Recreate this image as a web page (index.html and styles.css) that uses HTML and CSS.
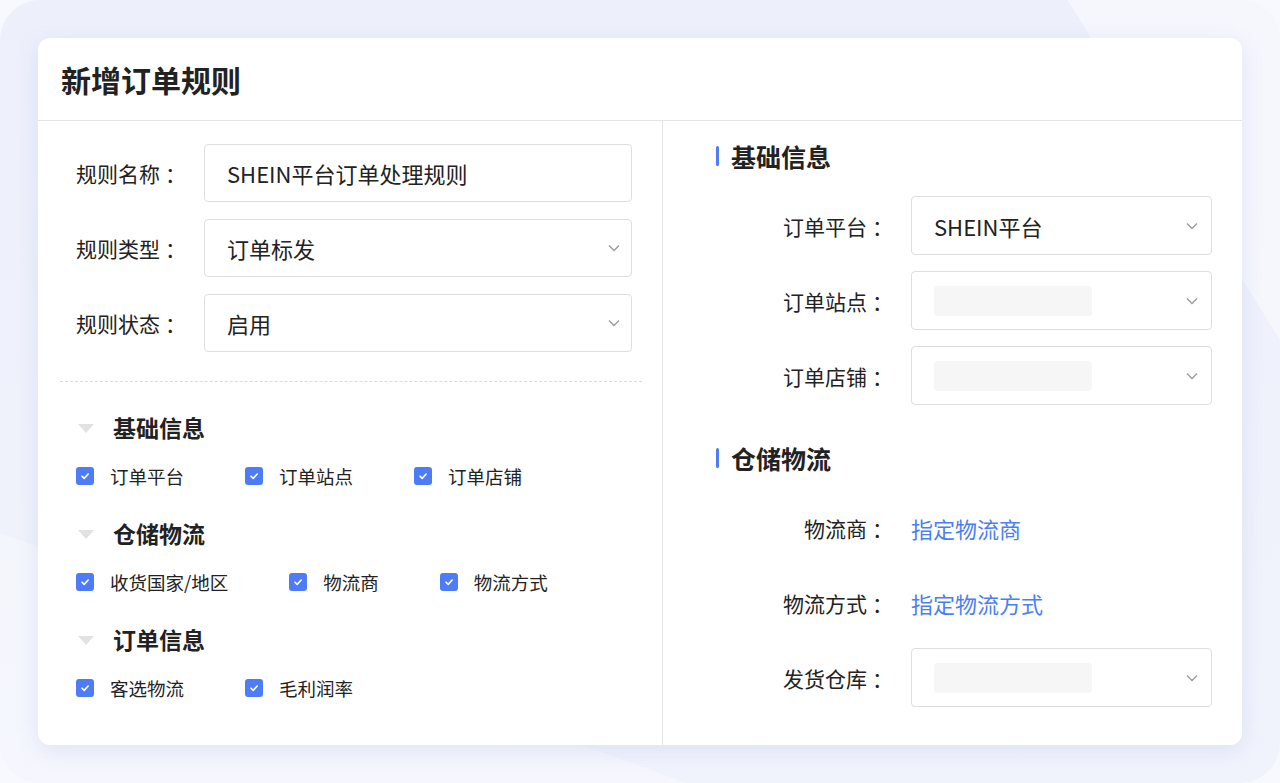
FILE: index.html
```html
<!DOCTYPE html>
<html lang="zh-CN">
<head>
<meta charset="utf-8">
<title>新增订单规则</title>
<link rel="stylesheet" href="styles.css">
</head>
<body>
<div class="frame">
  <div class="card">
    <div class="card-header"><h1 class="title">新增订单规则</h1></div>
    <div class="card-body">
      <div class="col-left">
        <div class="form-row">
          <label class="label">规则名称<span class="colon">：</span></label>
          <div class="field">SHEIN平台订单处理规则</div>
        </div>
        <div class="form-row">
          <label class="label">规则类型<span class="colon">：</span></label>
          <div class="field select">订单标发<svg class="chev" viewBox="0 0 12 8"><path d="M1 1.5l5 5 5-5"/></svg></div>
        </div>
        <div class="form-row">
          <label class="label">规则状态<span class="colon">：</span></label>
          <div class="field select">启用<svg class="chev" viewBox="0 0 12 8"><path d="M1 1.5l5 5 5-5"/></svg></div>
        </div>
        <div class="dash"></div>

        <div class="group-head"><span class="tri"></span>基础信息</div>
        <div class="check-row">
          <span class="check"><span class="box"><svg viewBox="0 0 12 12"><path d="M3 6.2l2.2 2.2L9.2 4"/></svg></span>订单平台</span>
          <span class="check"><span class="box"><svg viewBox="0 0 12 12"><path d="M3 6.2l2.2 2.2L9.2 4"/></svg></span>订单站点</span>
          <span class="check"><span class="box"><svg viewBox="0 0 12 12"><path d="M3 6.2l2.2 2.2L9.2 4"/></svg></span>订单店铺</span>
        </div>

        <div class="group-head"><span class="tri"></span>仓储物流</div>
        <div class="check-row">
          <span class="check"><span class="box"><svg viewBox="0 0 12 12"><path d="M3 6.2l2.2 2.2L9.2 4"/></svg></span>收货国家/地区</span>
          <span class="check"><span class="box"><svg viewBox="0 0 12 12"><path d="M3 6.2l2.2 2.2L9.2 4"/></svg></span>物流商</span>
          <span class="check"><span class="box"><svg viewBox="0 0 12 12"><path d="M3 6.2l2.2 2.2L9.2 4"/></svg></span>物流方式</span>
        </div>

        <div class="group-head"><span class="tri"></span>订单信息</div>
        <div class="check-row">
          <span class="check"><span class="box"><svg viewBox="0 0 12 12"><path d="M3 6.2l2.2 2.2L9.2 4"/></svg></span>客选物流</span>
          <span class="check"><span class="box"><svg viewBox="0 0 12 12"><path d="M3 6.2l2.2 2.2L9.2 4"/></svg></span>毛利润率</span>
        </div>
      </div>

      <div class="col-right">
        <h2 class="sec-title">基础信息</h2>
        <div class="r-row">
          <label class="r-label">订单平台<span class="colon">：</span></label>
          <div class="field select">SHEIN平台<svg class="chev" viewBox="0 0 12 8"><path d="M1 1.5l5 5 5-5"/></svg></div>
        </div>
        <div class="r-row">
          <label class="r-label">订单站点<span class="colon">：</span></label>
          <div class="field select"><span class="ph"></span><svg class="chev" viewBox="0 0 12 8"><path d="M1 1.5l5 5 5-5"/></svg></div>
        </div>
        <div class="r-row">
          <label class="r-label">订单店铺<span class="colon">：</span></label>
          <div class="field select"><span class="ph"></span><svg class="chev" viewBox="0 0 12 8"><path d="M1 1.5l5 5 5-5"/></svg></div>
        </div>

        <h2 class="sec-title sec-2">仓储物流</h2>
        <div class="r-row">
          <label class="r-label">物流商<span class="colon">：</span></label>
          <a class="link">指定物流商</a>
        </div>
        <div class="r-row">
          <label class="r-label">物流方式<span class="colon">：</span></label>
          <a class="link">指定物流方式</a>
        </div>
        <div class="r-row">
          <label class="r-label">发货仓库<span class="colon">：</span></label>
          <div class="field select"><span class="ph"></span><svg class="chev" viewBox="0 0 12 8"><path d="M1 1.5l5 5 5-5"/></svg></div>
        </div>
      </div>
    </div>
  </div>
</div>
</body>
</html>
```

FILE: styles.css
```css
* { box-sizing: border-box; }
html, body { margin: 0; padding: 0; }
body {
  width: 1280px;
  height: 783px;
  overflow: hidden;
  background: #f8f9fe;
  font-family: "Noto Sans CJK SC", "Noto Sans", sans-serif;
  color: #222;
}
.frame {
  width: 1280px;
  height: 783px;
  border-radius: 40px;
  padding: 38px;
  background:
    linear-gradient(58deg, rgba(255,255,255,0) 0 88%, rgba(255,255,255,0.45) 88% 100%),
    linear-gradient(200deg, rgba(255,255,255,0) 0 80%, rgba(255,255,255,0.3) 80% 100%),
    linear-gradient(180deg, #edf0fb 0%, #f1f3fc 100%);
}
.card {
  width: 1204px;
  height: 707px;
  background: #fff;
  border-radius: 12px;
  box-shadow: 0 6px 22px rgba(120, 135, 200, 0.16);
  display: flex;
  flex-direction: column;
  overflow: hidden;
}
.card-header {
  height: 83px;
  border-bottom: 1px solid #e4e4e6;
  display: flex;
  align-items: center;
  padding-left: 23px;
  flex: none;
}
.title {
  margin: 0;
  font-size: 30px;
  font-weight: 700;
  color: #222;
  line-height: 1;
}
.card-body {
  flex: 1;
  display: flex;
}
.col-left {
  width: 625px;
  border-right: 1px solid #e4e4e6;
  padding: 23px 30px 0 38px;
}
.form-row {
  display: flex;
  align-items: center;
  height: 58px;
  margin-bottom: 17px;
}
.form-row:nth-child(3) { margin-bottom: 0; }
.label {
  width: 128px;
  flex: none;
  font-size: 21px;
  color: #222;
}
.colon {
  margin-left: 5px;
  margin-right: -5px;
}
.field {
  flex: 1;
  height: 100%;
  border: 1.5px solid #dedede;
  border-radius: 4px;
  display: flex;
  align-items: center;
  padding: 0 11px 0 22px;
  font-size: 22px;
  color: #222;
}
.select { justify-content: space-between; }
.chev {
  width: 12px;
  height: 8px;
  fill: none;
  stroke: #9a9aa2;
  stroke-width: 1.4;
  flex: none;
}
.dash {
  height: 0;
  border-top: 1.5px dashed #dcdcdc;
  margin: 29px -10px 0 -16px;
}
.group-head {
  margin-top: 30px;
  height: 30px;
  display: flex;
  align-items: center;
  font-size: 23px;
  font-weight: 700;
  color: #222;
}
.tri {
  width: 0;
  height: 0;
  border-left: 8.5px solid transparent;
  border-right: 8.5px solid transparent;
  border-top: 9px solid #e2e2e4;
  margin: 2px 19px 0 2px;
}
.check-row {
  margin-top: 22px;
  height: 24px;
  display: flex;
  align-items: center;
  gap: 61px;
}
.check {
  display: flex;
  align-items: center;
  font-size: 18.5px;
  color: #222;
}
.box {
  width: 18px;
  height: 18px;
  border-radius: 3px;
  background: #4d7cf6;
  margin-right: 16px;
  display: flex;
  align-items: center;
  justify-content: center;
}
.box svg {
  width: 12px;
  height: 12px;
  fill: none;
  stroke: #fff;
  stroke-width: 1.6;
  stroke-linecap: round;
  stroke-linejoin: round;
}
.col-right {
  flex: 1;
  padding: 20px 30px 0 53px;
}
.sec-title {
  margin: 0 0 25px;
  height: 30px;
  display: flex;
  align-items: center;
  font-size: 25px;
  font-weight: 700;
  color: #222;
}
.sec-title::before {
  content: "";
  width: 3px;
  height: 20px;
  border-radius: 2px;
  background: #4d7cf6;
  margin-right: 12px;
}
.sec-2 { margin-top: 38px; }
.r-row {
  display: flex;
  align-items: center;
  height: 59px;
  margin-bottom: 16px;
}
.r-label {
  width: 172px;
  margin-right: 23px;
  text-align: right;
  font-size: 21px;
  color: #222;
  flex: none;
}
.r-row .field { padding-left: 22px; padding-right: 13px; }
.ph {
  width: 158px;
  height: 30px;
  border-radius: 4px;
  background: #f6f6f6;
}
.link {
  font-size: 22px;
  color: #4a7ef5;
  text-decoration: none;
}
```
